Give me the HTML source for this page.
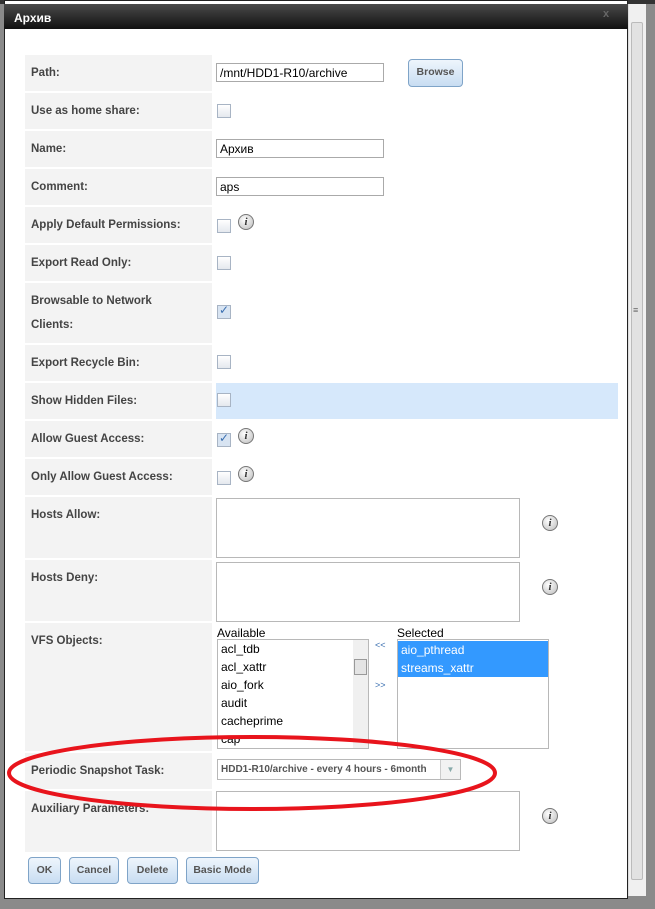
<!DOCTYPE html>
<html><head><meta charset="utf-8"><style>
*{box-sizing:border-box;margin:0;padding:0}
body{width:655px;height:909px;background:#8a8a8a;position:relative;overflow:hidden;font-family:"Liberation Sans",sans-serif}
.a{position:absolute}
#dlg{left:4px;top:0;width:624px;height:899px;background:#fff;border:1px solid #222}
#title{left:4px;top:4px;width:624px;height:25px;background:linear-gradient(#4a4a4a,#111);color:#fff;font-weight:bold;font-size:12px;padding:7px 0 0 10px}
.lab{position:absolute;left:25px;width:187px;background:#f3f3f3;font-weight:bold;font-size:11.5px;color:#444;padding-left:6px}
.cb{position:absolute;left:217px;width:14px;height:14px;border:1px solid #a8b4c4;background:linear-gradient(#fff,#e4e8ee)}
.cb.on{background:#d8e4f2}
.cb.on:after{content:"✓";position:absolute;left:1px;top:-3px;font-size:12px;color:#3a6fb0}
.inp{position:absolute;left:216px;width:168px;height:19px;border:1px solid #aaa;font-size:12px;padding:2px 3px;color:#000}
.ta{position:absolute;left:216px;width:304px;border:1px solid #b8b8b8;background:#fff}
.info{position:absolute;width:16px;height:16px;border-radius:50%;border:1px solid #777;background:radial-gradient(circle at 40% 35%,#fff,#bbb);font:italic bold 11px "Liberation Serif",serif;text-align:center;line-height:14px;color:#333}
.btn{position:absolute;top:857px;height:27px;border:1px solid #7fa4c8;border-radius:4px;background:linear-gradient(#eef5fc,#c8ddf2);font-weight:bold;font-size:10.5px;color:#555;text-align:center;line-height:25px}
.li{font-size:12px;height:18px;line-height:18px;padding-left:3px;color:#000}
</style></head><body>
<div class="a" style="left:0;top:0;width:655px;height:4px;background:#333"></div>
<div class="a" id="dlg"></div>
<div class="a" id="title">Архив</div>
<div class="a" style="left:603px;top:8px;color:#666;font-size:11px;font-weight:bold">x</div>
<div class="a" style="left:628px;top:4px;width:18px;height:892px;background:#f0f0f0;border-left:1px solid #ddd"></div>
<div class="a" style="left:631px;top:22px;width:12px;height:858px;background:#e2e2e2;border:1px solid #bbb;border-radius:2px"></div>
<div class="a" style="left:633px;top:305px;font-size:9px;color:#666">≡</div>

<div class="lab" style="top:55px;height:36px;line-height:36px">Path:</div>
<div class="inp" style="top:63px">/mnt/HDD1-R10/archive</div>
<div class="btn" style="left:408px;top:59px;width:55px;height:28px">Browse</div>

<div class="lab" style="top:93px;height:36px;line-height:36px">Use as home share:</div>
<div class="cb" style="top:104px"></div>
<div class="lab" style="top:131px;height:36px;line-height:36px">Name:</div>
<div class="inp" style="top:139px">Архив</div>
<div class="lab" style="top:169px;height:36px;line-height:36px">Comment:</div>
<div class="inp" style="top:177px">aps</div>
<div class="lab" style="top:207px;height:36px;line-height:36px">Apply Default Permissions:</div>
<div class="cb" style="top:219px"></div><div class="info" style="left:238px;top:214px">i</div>
<div class="lab" style="top:245px;height:36px;line-height:36px">Export Read Only:</div>
<div class="cb" style="top:256px"></div>
<div class="lab" style="top:283px;height:60px;line-height:24px;padding-top:6px">Browsable to Network<br>Clients:</div>
<div class="cb on" style="top:305px"></div>
<div class="lab" style="top:345px;height:36px;line-height:36px">Export Recycle Bin:</div>
<div class="cb" style="top:355px"></div>
<div class="lab" style="top:383px;height:36px;line-height:36px">Show Hidden Files:</div>
<div class="a" style="left:216px;top:383px;width:402px;height:36px;background:#d6e8fb"></div>
<div class="cb" style="top:393px"></div>
<div class="lab" style="top:421px;height:36px;line-height:36px">Allow Guest Access:</div>
<div class="cb on" style="top:433px"></div><div class="info" style="left:238px;top:428px">i</div>
<div class="lab" style="top:459px;height:36px;line-height:36px">Only Allow Guest Access:</div>
<div class="cb" style="top:471px"></div><div class="info" style="left:238px;top:466px">i</div>
<div class="lab" style="top:497px;height:61px;line-height:36px">Hosts Allow:</div>
<div class="ta" style="top:498px;height:60px"></div><div class="info" style="left:542px;top:515px">i</div>
<div class="lab" style="top:560px;height:61px;line-height:36px">Hosts Deny:</div>
<div class="ta" style="top:562px;height:60px"></div><div class="info" style="left:542px;top:579px">i</div>
<div class="lab" style="top:623px;height:128px;line-height:36px">VFS Objects:</div>
<div class="a" style="left:217px;top:626px;font-size:12px">Available</div>
<div class="a" style="left:397px;top:626px;font-size:12px">Selected</div>
<div class="a" style="left:217px;top:639px;width:152px;height:110px;border:1px solid #b8b8b8;overflow:hidden;background:#fff">
<div class="li">acl_tdb</div><div class="li">acl_xattr</div><div class="li">aio_fork</div><div class="li">audit</div><div class="li">cacheprime</div><div class="li">cap</div>
<div class="a" style="left:135px;top:0;width:15px;height:108px;background:#f0f0f0"></div>
<div class="a" style="left:136px;top:19px;width:13px;height:16px;background:#e4e4e4;border:1px solid #999"></div>
</div>
<div class="a" style="left:375px;top:640px;font-size:9px;color:#3a6fb0">&lt;&lt;</div>
<div class="a" style="left:375px;top:680px;font-size:9px;color:#3a6fb0">&gt;&gt;</div>
<div class="a" style="left:397px;top:639px;width:152px;height:110px;border:1px solid #b8b8b8;background:#fff;padding-top:1px">
<div class="li" style="background:#3399ff;color:#fff">aio_pthread</div><div class="li" style="background:#3399ff;color:#fff">streams_xattr</div></div>
<div class="lab" style="top:753px;height:36px;line-height:36px">Periodic Snapshot Task:</div>
<div class="a" style="left:217px;top:759px;width:244px;height:21px;border:1px solid #b8b8b8;font-weight:bold;font-size:10px;color:#555;line-height:19px;padding-left:3px;background:#fff">HDD1-R10/archive - every 4 hours - 6month</div>
<div class="a" style="left:440px;top:760px;width:20px;height:19px;border-left:1px solid #ccc;background:#f2f2f2;text-align:center;font-size:8px;color:#8aa;line-height:19px">▼</div>
<div class="lab" style="top:791px;height:61px;line-height:36px">Auxiliary Parameters:</div>
<div class="ta" style="top:791px;height:60px"></div><div class="info" style="left:542px;top:808px">i</div>

<div class="btn" style="left:28px;width:33px">OK</div>
<div class="btn" style="left:69px;width:50px">Cancel</div>
<div class="btn" style="left:127px;width:51px">Delete</div>
<div class="btn" style="left:186px;width:73px">Basic Mode</div>

<svg class="a" style="left:0;top:0" width="655" height="909"><ellipse cx="252" cy="773" rx="243" ry="36" fill="none" stroke="#e8141c" stroke-width="4"/></svg>
</body></html>
